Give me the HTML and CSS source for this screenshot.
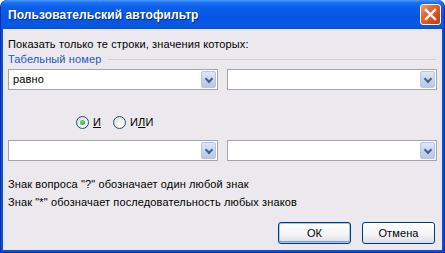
FILE: index.html
```html
<!DOCTYPE html>
<html lang="ru">
<head>
    <meta charset="UTF-8">
    <title>Пользовательский автофильтр</title>
    <link rel="stylesheet" href="styles.css">
</head>
<body>
<div class="ventana">
    <div class="titulo">
        <span class="tituloTexto">Пользовательский автофильтр</span>
        <span class="cerrar">
            <svg width="13" height="13" viewBox="0 0 13 13">
                <path d="M2 2 L11 11 M11 2 L2 11" stroke="#fff" stroke-width="2.4" stroke-linecap="square"/>
            </svg>
        </span>
    </div>

    <div class="cliente">
        <p class="pregunta">Показать только те строки, значения которых:</p>
        <div class="grupo"><span>Табельный номер</span></div>

        <div class="fila">
            <div class="combo"><span class="valor">равно</span><span class="flecha"></span></div>
            <div class="combo"><span class="valor"></span><span class="flecha"></span></div>
        </div>

        <div class="radios">
            <label class="radio"><span class="circulo marcado"></span><span><u>И</u></span></label>
            <label class="radio"><span class="circulo"></span><span>И<u>Л</u>И</span></label>
        </div>

        <div class="fila segunda">
            <div class="combo"><span class="valor"></span><span class="flecha"></span></div>
            <div class="combo"><span class="valor"></span><span class="flecha"></span></div>
        </div>

        <p class="ayuda">Знак вопроса "?" обозначает один любой знак<br>
            Знак "*" обозначает последовательность любых знаков</p>

        <div class="botones">
            <span class="boton defecto">ОК</span>
            <span class="boton">Отмена</span>
        </div>
    </div>
</div>
</body>
</html>
```

FILE: styles.css
```css
body {
    margin: 0;
    font-family: "Liberation Sans", Arial, sans-serif;
    font-size: 11px;
    letter-spacing: 0.12px;
    background: #ffffff;
}

.ventana {
    width: 445px;
    height: 253px;
    box-sizing: border-box;
    background: #0a4fd8;
    border-radius: 7px 7px 0 0;
    border: 1px solid #0831a8;
    border-top: none;
    display: flex;
    flex-direction: column;
}

.titulo {
    height: 29px;
    flex: none;
    display: flex;
    align-items: center;
    justify-content: space-between;
    padding: 0 3px 0 7px;
    border-radius: 7px 7px 0 0;
    background: linear-gradient(#4a9cff 0, #1a6cf2 3px, #0a5ee8 8px, #0656e0 18px, #075ae6 25px, #0a4fd2 29px);
}

.tituloTexto {
    color: #fff;
    font-weight: bold;
    font-size: 12px;
    letter-spacing: 0.1px;
    text-shadow: 1px 1px 0 #0a2a8a;
    padding-top: 1px;
}

.cerrar {
    width: 19px;
    height: 19px;
    border: 1px solid #fff;
    border-radius: 3px;
    background: linear-gradient(135deg, #f0a07a 0%, #e5602e 40%, #d0441b 80%, #c03a18 100%);
    display: flex;
    align-items: center;
    justify-content: center;
}

.cliente {
    flex: 1;
    margin: 0 2px 2px;
    background: #ebe9ed;
    padding: 0 5px 0 5px;
    display: flex;
    flex-direction: column;
}

.pregunta {
    margin: 8px 0 0;
    line-height: 14px;
    color: #000;
}

.grupo {
    display: flex;
    align-items: center;
    line-height: 14px;
    color: #2456c9;
    margin-top: 1px;
}

.grupo::after {
    content: "";
    flex: 1;
    height: 1px;
    background: #d0ced8;
    margin-left: 7px;
    margin-right: 1px;
}

.fila {
    display: grid;
    grid-template-columns: 210px 210px;
    column-gap: 9px;
    margin-top: 3px;
}

.segunda {
    margin-top: 11px;
}

.combo {
    height: 21px;
    box-sizing: border-box;
    border: 1px solid #a5a4ab;
    background: #fff;
    display: flex;
    align-items: stretch;
    padding: 1px;
}

.valor {
    flex: 1;
    padding-left: 3px;
    line-height: 17px;
    color: #000;
}

.flecha {
    width: 15px;
    box-sizing: border-box;
    border: 1px solid #b7c6e4;
    border-radius: 2px;
    background: linear-gradient(#dde7f8, #c2d3f0 60%, #b4c8ec);
    position: relative;
}

.flecha::after {
    content: "";
    position: absolute;
    left: 4px;
    top: 4px;
    width: 4px;
    height: 4px;
    border-right: 2px solid #4b5f85;
    border-bottom: 2px solid #4b5f85;
    transform: rotate(45deg);
}

.radios {
    display: flex;
    gap: 12px;
    margin: 25px 0 0 68px;
    height: 14px;
    align-items: center;
}

.radio {
    display: flex;
    align-items: center;
    gap: 4px;
    color: #000;
}

.circulo {
    width: 11px;
    height: 11px;
    border: 1px solid #1c5180;
    border-radius: 50%;
    background: radial-gradient(circle at 70% 70%, #fff 0, #f1f1ef 40%, #d4d2cc 100%);
    position: relative;
}

.marcado::after {
    content: "";
    position: absolute;
    left: 3px;
    top: 3px;
    width: 5px;
    height: 5px;
    border-radius: 50%;
    background: radial-gradient(circle at 40% 40%, #6de06d, #21a121);
}

.ayuda {
    margin: 14px 0 0 0;
    line-height: 18px;
    color: #000;
}

.botones {
    display: flex;
    justify-content: flex-end;
    gap: 11px;
    margin-top: 11px;
    margin-right: 2px;
}

.boton {
    width: 73px;
    height: 22px;
    box-sizing: border-box;
    border: 1px solid #003c74;
    border-radius: 3px;
    background: linear-gradient(#ffffff, #f3f3f6 60%, #dcdce4);
    display: flex;
    align-items: center;
    justify-content: center;
    color: #000;
}

.defecto {
    box-shadow: inset 0 0 0 1px #a9c4f5, inset 0 -1px 0 1px #6f9be8;
}
```
